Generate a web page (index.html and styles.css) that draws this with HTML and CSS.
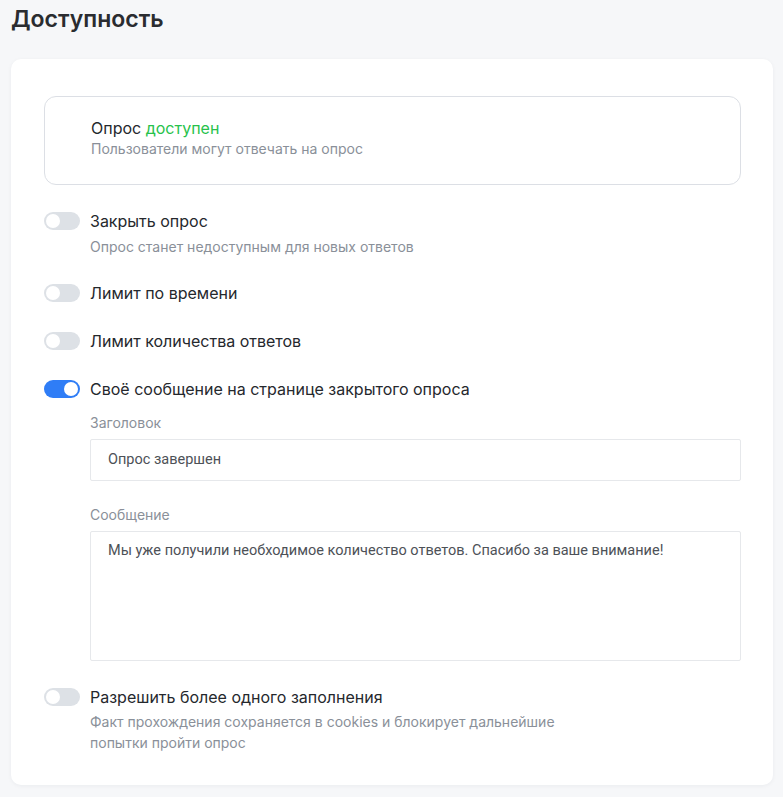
FILE: index.html
```html
<!DOCTYPE html>
<html lang="ru">
<head>
<meta charset="UTF-8">
<title>Доступность</title>
<link rel="stylesheet" href="styles.css">
</head>
<body>

<h1 class="page-title">Доступность</h1>

<section class="panel">
  <!--Статус-->
  <div class="status-box">
    <div class="status-title">Опрос <span class="ok">доступен</span></div>
    <div class="status-desc">Пользователи могут отвечать на опрос</div>
  </div>

  <!--Закрыть опрос-->
  <div class="option">
    <span class="toggle"></span>
    <div class="option-body">
      <div class="option-label">Закрыть опрос</div>
      <div class="option-desc">Опрос станет недоступным для новых ответов</div>
    </div>
  </div>

  <div class="option">
    <span class="toggle"></span>
    <div class="option-body">
      <div class="option-label">Лимит по времени</div>
    </div>
  </div>

  <div class="option">
    <span class="toggle"></span>
    <div class="option-body">
      <div class="option-label">Лимит количества ответов</div>
    </div>
  </div>

  <!--Своё сообщение-->
  <div class="option">
    <span class="toggle on"></span>
    <div class="option-body">
      <div class="option-label">Своё сообщение на странице закрытого опроса</div>
      <div class="field-label">Заголовок</div>
      <div class="input">Опрос завершен</div>
      <div class="field-label spaced">Сообщение</div>
      <div class="input textarea">Мы уже получили необходимое количество ответов. Спасибо за ваше внимание!</div>
    </div>
  </div>

  <div class="option">
    <span class="toggle"></span>
    <div class="option-body">
      <div class="option-label">Разрешить более одного заполнения</div>
      <div class="option-desc long">Факт прохождения сохраняется в cookies и блокирует дальнейшие попытки пройти опрос</div>
    </div>
  </div>
</section>

</body>
</html>
```

FILE: styles.css
```css
* {
  padding: 0;
  margin: 0;
  box-sizing: border-box;
}

body {
  background: #f6f7f9;
  font-family: Inter, "Noto Sans", sans-serif;
  color: #25282d;
  padding: 0 10px 12px 11px;
}

.page-title {
  font-size: 23px;
  font-weight: 600;
  line-height: 38px;
  color: #2a2c30;
}

.panel {
  margin-top: 21px;
  background: #fff;
  border-radius: 10px;
  box-shadow: 0 1px 4px rgba(20, 30, 50, .05);
  padding: 37px 32px 32px 33px;
}

.status-box {
  border: 1px solid #dcdfe5;
  border-radius: 12px;
  padding: 20px 46px 25px;
}

.status-title {
  font-size: 16px;
  line-height: 22px;
}

.ok {
  color: #27c24c;
}

.status-desc,
.option-desc {
  font-size: 14px;
  line-height: 20px;
  color: #8a9099;
}

.option {
  display: flex;
  gap: 10px;
  margin-top: 24px;
}

.toggle {
  flex: none;
  width: 36px;
  height: 18px;
  margin-top: 3px;
  border-radius: 9px;
  background: #dde1e6;
  position: relative;
}

.toggle::after {
  content: "";
  position: absolute;
  top: 2px;
  left: 2px;
  width: 14px;
  height: 14px;
  border-radius: 50%;
  background: #fff;
}

.toggle.on {
  background: #2f7df6;
}

.toggle.on::after {
  left: 20px;
}

.option-body {
  flex: 1;
}

.option-label {
  font-size: 16px;
  line-height: 24px;
}

.option-desc {
  margin-top: 4px;
}

.option-desc.long {
  margin-top: 2px;
  line-height: 21px;
  max-width: 480px;
}

.field-label {
  margin-top: 12px;
  font-size: 14px;
  line-height: 20px;
  color: #8a9099;
}

.field-label.spaced {
  margin-top: 24px;
}

.input {
  margin-top: 6px;
  height: 42px;
  border: 1px solid #e6e8eb;
  border-radius: 2px;
  padding: 0 17px;
  font-family: Roboto, "Liberation Sans", sans-serif;
  font-size: 14.5px;
  line-height: 40px;
  color: #4d5157;
}

.input.textarea {
  height: 130px;
  line-height: 20px;
  padding-top: 9px;
}
```
